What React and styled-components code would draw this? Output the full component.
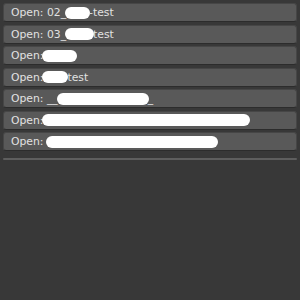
import React from 'react';
import styled, { createGlobalStyle } from 'styled-components';

const GlobalStyle = createGlobalStyle`
  html, body {
    margin: 0;
    padding: 0;
    background: #383838;
    height: 100%;
  }
  #root {
    min-height: 100%;
  }
`;

const rows = [
  [{ t: 'Open: 02_' }, { b: 25 }, { t: '-test' }],
  [{ t: 'Open: 03_' }, { b: 29 }, { t: 'test' }],
  [{ t: 'Open:' }, { b: 35 }],
  [{ t: 'Open:' }, { b: 26 }, { t: 'test' }],
  [{ t: 'Open: __' }, { b: 92 }, { t: '_' }],
  [{ t: 'Open:' }, { b: 208 }],
  [{ t: 'Open: ' }, { b: 172 }],
];

const App = () => {
  return (
    <Panel>
      <GlobalStyle />
      <List>
        {rows.map((parts, i) => (
          <OpenButton key={i}>
            {parts.map((p, j) =>
              p.t ? <span key={j}>{p.t}</span> : <Blot key={j} $w={p.b} />
            )}
          </OpenButton>
        ))}
      </List>
      <Divider />
    </Panel>
  );
};

const Panel = styled.div`
  padding: 3px 3px 0 3px;
  font-family: 'DejaVu Sans', sans-serif;
`;

const List = styled.div`
  display: flex;
  flex-direction: column;
  gap: 2.5px;
`;

const OpenButton = styled.div`
  box-sizing: border-box;
  height: 19px;
  display: flex;
  align-items: center;
  padding-left: 7px;
  background: #595959;
  border: 1px solid #464646;
  border-bottom-color: #2c2c2c;
  border-radius: 3px;
  color: #e2e2e2;
  font-size: 10.8px;
  white-space: pre;
  overflow: hidden;
`;

const Blot = styled.span`
  display: inline-block;
  width: ${(p) => p.$w}px;
  height: 12px;
  background: #ffffff;
  border-radius: 6px;
  margin: 0 -1px;
`;

const Divider = styled.div`
  margin-top: 7px;
  height: 2px;
  background: #5e5e5e;
  border-radius: 1px;
`;

export default App;
